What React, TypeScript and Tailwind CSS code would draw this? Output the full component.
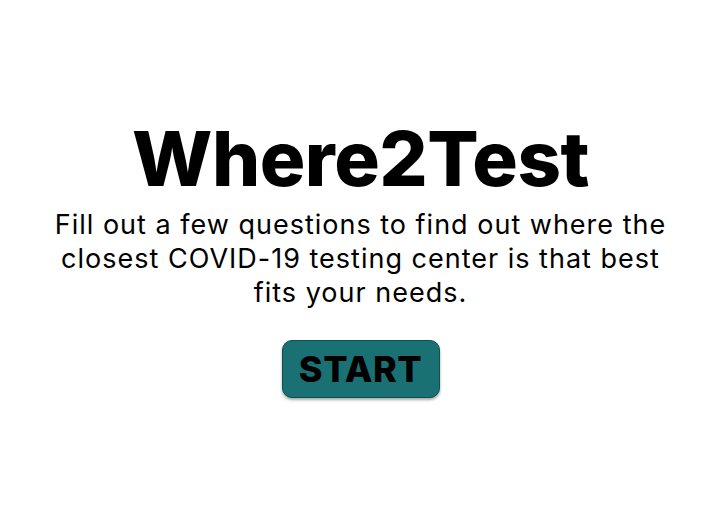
import React from 'react'

const App = () => {
  return (
    <div className="min-h-screen bg-white flex flex-col items-center justify-center text-black" style={{ fontFamily: 'Inter, "Open Sans", sans-serif' }}>
      <h1 className="text-[76px] font-extrabold leading-none tracking-[-0.5px] mt-[4px]">Where2Test</h1>
      <p className="mt-[12px] text-center text-[27px] leading-[34px] font-normal tracking-[1px]">
        Fill out a few questions to find out where the
        <br />
        closest COVID-19 testing center is that best
        <br />
        fits your needs.
      </p>
      <button className="mt-[30px] w-[158px] h-[58px] rounded-[10px] bg-[#1a7173] border border-[#0f4f51] shadow-[0_2px_3px_rgba(0,0,0,0.35)] text-[36px] font-extrabold leading-none tracking-[0.5px]">
        START
      </button>
    </div>
  )
}

export default App
